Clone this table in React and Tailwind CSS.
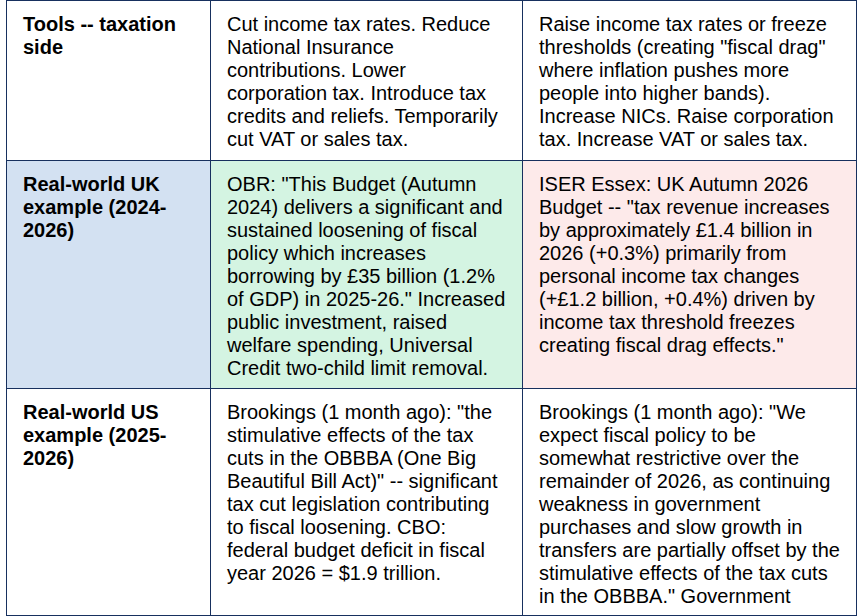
import React from 'react';

const rows = [
    {
        label: ['Tools -- taxation', 'side'],
        bg: ['bg-white', 'bg-white', 'bg-white'],
        pad: 'pt-3 pb-[9px]',
        left: [
            'Cut income tax rates. Reduce',
            'National Insurance',
            'contributions. Lower',
            'corporation tax. Introduce tax',
            'credits and reliefs. Temporarily',
            'cut VAT or sales tax.',
        ],
        right: [
            'Raise income tax rates or freeze',
            'thresholds (creating "fiscal drag"',
            'where inflation pushes more',
            'people into higher bands).',
            'Increase NICs. Raise corporation',
            'tax. Increase VAT or sales tax.',
        ],
    },
    {
        label: ['Real-world UK', 'example (2024-', '2026)'],
        bg: ['bg-[#d3e1f2]', 'bg-[#d4f4e2]', 'bg-[#fdeaea]'],
        pad: 'pt-3 pb-2',
        left: [
            'OBR: "This Budget (Autumn',
            '2024) delivers a significant and',
            'sustained loosening of fiscal',
            'policy which increases',
            'borrowing by £35 billion (1.2%',
            'of GDP) in 2025-26." Increased',
            'public investment, raised',
            'welfare spending, Universal',
            'Credit two-child limit removal.',
        ],
        right: [
            'ISER Essex: UK Autumn 2026',
            'Budget -- "tax revenue increases',
            'by approximately £1.4 billion in',
            '2026 (+0.3%) primarily from',
            'personal income tax changes',
            '(+£1.2 billion, +0.4%) driven by',
            'income tax threshold freezes',
            'creating fiscal drag effects."',
        ],
    },
    {
        label: ['Real-world US', 'example (2025-', '2026)'],
        bg: ['bg-white', 'bg-white', 'bg-white'],
        pad: 'pt-3 pb-[7px]',
        left: [
            'Brookings (1 month ago): "the',
            'stimulative effects of the tax',
            'cuts in the OBBBA (One Big',
            'Beautiful Bill Act)" -- significant',
            'tax cut legislation contributing',
            'to fiscal loosening. CBO:',
            'federal budget deficit in fiscal',
            'year 2026 = $1.9 trillion.',
        ],
        right: [
            'Brookings (1 month ago): "We',
            'expect fiscal policy to be',
            'somewhat restrictive over the',
            'remainder of 2026, as continuing',
            'weakness in government',
            'purchases and slow growth in',
            'transfers are partially offset by the',
            'stimulative effects of the tax cuts',
            'in the OBBBA." Government',
        ],
    },
];

const Cell = ({ lines, bg, pad, bold }) => (
    <div className={`${bg} ${pad} border-r border-b border-[#17305e] pl-4 pr-2 whitespace-nowrap ${bold ? 'font-bold' : ''}`}>
        {lines.map((line, i) => (
            <div key={i}>{line}</div>
        ))}
    </div>
);

const App = () => {
    return (
        <div className="w-[864px] h-[616px] bg-white overflow-hidden font-['Liberation_Sans',Arial,sans-serif] text-[20px] leading-[23px] text-black">
            <div className="ml-[6px] w-[851px] grid grid-cols-[204px_312px_334px] border-l border-t border-[#17305e]">
                {rows.map((row, i) => (
                    <React.Fragment key={i}>
                        <Cell lines={row.label} bg={row.bg[0]} pad={row.pad} bold />
                        <Cell lines={row.left} bg={row.bg[1]} pad={row.pad} />
                        <Cell lines={row.right} bg={row.bg[2]} pad={row.pad} />
                    </React.Fragment>
                ))}
            </div>
        </div>
    );
};

export default App;
